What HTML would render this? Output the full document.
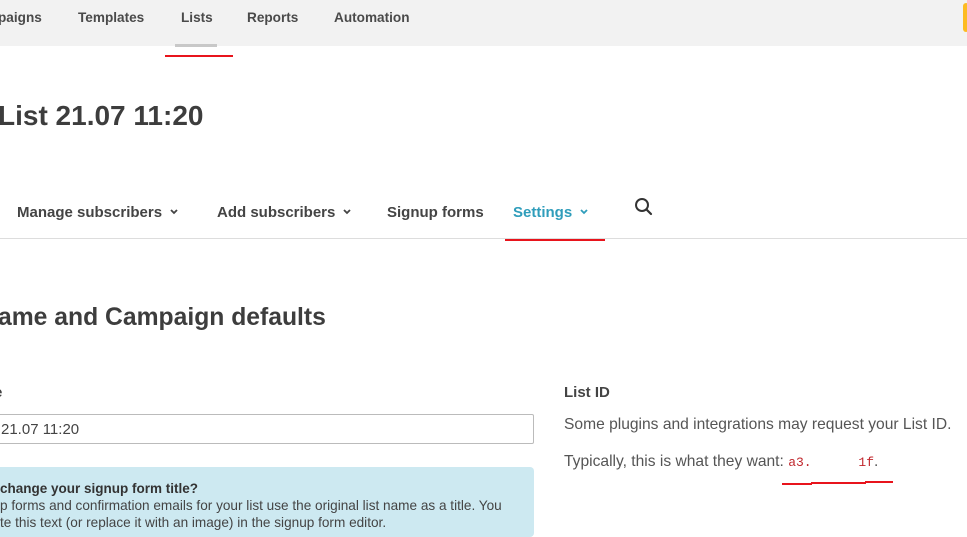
<!DOCTYPE html>
<html><head><meta charset="utf-8"><style>
*{margin:0;padding:0;box-sizing:border-box}
body{width:967px;height:524px;overflow:hidden;background:#fff;font-family:"Liberation Sans",sans-serif;color:#444;position:relative}
.a{position:absolute;white-space:nowrap}
.top{position:absolute;left:0;top:0;width:967px;height:46px;background:#f2f2f2}
.nav{font-size:13.6px;font-weight:bold;color:#4a4a4a;top:10px}
.tab{font-size:15px;font-weight:bold;color:#444;top:204px}
.red{position:absolute;background:#e8141c;height:2px}
p.t{font-size:15.6px;color:#555}
.chev{display:inline-block;margin-left:8px;vertical-align:2px}
</style></head><body>
<div class="top"></div>
<div class="a" style="left:963px;top:3px;width:6px;height:29px;background:#fdbb22;border-radius:3px"></div>
<div class="a nav" style="left:-2px">paigns</div>
<div class="a nav" style="left:78px">Templates</div>
<div class="a nav" style="left:181px">Lists</div>
<div class="a nav" style="left:247px">Reports</div>
<div class="a nav" style="left:334px">Automation</div>
<div class="a" style="left:175px;top:44px;width:42px;height:3px;background:#c8c8c8"></div>
<div class="red" style="left:165px;top:55px;width:68px"></div>
<div class="a" style="left:-2px;top:100px;font-size:28px;font-weight:bold;color:#3d3d3d">List 21.07 11:20</div>
<div class="a tab" style="left:17px">Manage subscribers<svg class="chev" width="8" height="6" viewBox="0 0 8 6"><path d="M1 1l3 3 3-3" fill="none" stroke="#444" stroke-width="1.8"/></svg></div>
<div class="a tab" style="left:217px">Add subscribers<svg class="chev" width="8" height="6" viewBox="0 0 8 6"><path d="M1 1l3 3 3-3" fill="none" stroke="#444" stroke-width="1.8"/></svg></div>
<div class="a tab" style="left:387px">Signup forms</div>
<div class="a tab" style="left:513px;color:#2f9dbb">Settings<svg class="chev" width="8" height="6" viewBox="0 0 8 6"><path d="M1 1l3 3 3-3" fill="none" stroke="#2f9dbb" stroke-width="1.8"/></svg></div>
<svg class="a" style="left:634px;top:197px" width="20" height="20" viewBox="0 0 20 20"><circle cx="8" cy="8" r="6" fill="none" stroke="#333" stroke-width="2"/><path d="M12.5 12.5L17 17" stroke="#333" stroke-width="2.2" stroke-linecap="round"/></svg>
<div class="a" style="left:0;top:238px;width:967px;height:1px;background:#ddd"></div>
<div class="red" style="left:505px;top:239px;width:100px"></div>
<div class="a" style="left:-2px;top:304px;font-size:24.7px;font-weight:bold;color:#3d3d3d">ame and Campaign defaults</div>
<div class="a" style="left:-6px;top:384px;font-size:15px;font-weight:bold;color:#444">e</div>
<div class="a" style="left:-5px;top:414px;width:539px;height:30px;border:1px solid #bbb;border-radius:2px;font-size:15px;color:#444;padding:6px 0 0 5px">21.07 11:20</div>
<div class="a" style="left:-5px;top:467px;width:539px;height:70px;background:#cde9f1;border-radius:4px"></div>
<div class="a" style="left:0;top:481px;font-size:13.5px;font-weight:bold;color:#333">change your signup form title?</div>
<div class="a" style="left:0;top:498px;font-size:13.6px;color:#444">p forms and confirmation emails for your list use the original list name as a title. You</div>
<div class="a" style="left:0;top:515px;font-size:13.6px;color:#444">te this text (or replace it with an image) in the signup form editor.</div>
<div class="a" style="left:564px;top:384px;font-size:15px;font-weight:bold;color:#444">List ID</div>
<p class="a t" style="left:564px;top:416px">Some plugins and integrations may request your List ID.</p>
<p class="a t" style="left:564px;top:453px">Typically, this is what they want: <span style="font-family:'Liberation Mono',monospace;font-size:13px;color:#c0272d">a3.&nbsp;&nbsp;&nbsp;&nbsp;&nbsp;&nbsp;1f</span>.</p>
<div class="red" style="left:782px;top:483px;width:30px"></div>
<div class="red" style="left:811px;top:482px;width:55px"></div>
<div class="red" style="left:865px;top:481px;width:28px"></div>
</body></html>
